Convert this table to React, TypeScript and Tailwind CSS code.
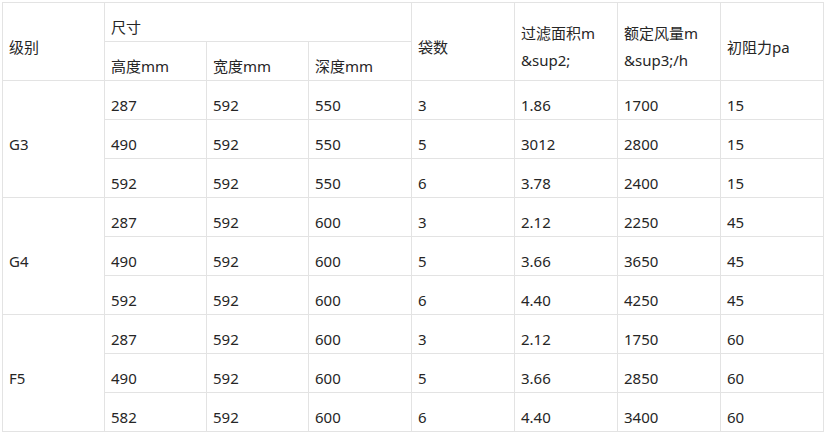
const groups = [
  {
    grade: "G3",
    rows: [
      ["287", "592", "550", "3", "1.86", "1700", "15"],
      ["490", "592", "550", "5", "3012", "2800", "15"],
      ["592", "592", "550", "6", "3.78", "2400", "15"],
    ],
  },
  {
    grade: "G4",
    rows: [
      ["287", "592", "600", "3", "2.12", "2250", "45"],
      ["490", "592", "600", "5", "3.66", "3650", "45"],
      ["592", "592", "600", "6", "4.40", "4250", "45"],
    ],
  },
  {
    grade: "F5",
    rows: [
      ["287", "592", "600", "3", "2.12", "1750", "60"],
      ["490", "592", "600", "5", "3.66", "2850", "60"],
      ["582", "592", "600", "6", "4.40", "3400", "60"],
    ],
  },
];

const widths = [102, 102, 102, 103, 103, 103, 103, 103];

const cell =
  "border border-[#e3e3e3] pl-[6px] pr-[4px] pt-[11px] pb-0 align-middle text-left font-normal leading-[27px]";

export default function App() {
  return (
    <div className="bg-white p-[2px]">
      <table
        className="w-[821px] table-fixed border-collapse text-[15px] text-[#262626]"
        style={{ fontFamily: '"Noto Sans", "Noto Sans CJK SC", sans-serif' }}
      >
        <colgroup>
          {widths.map((w, i) => (
            <col key={i} style={{ width: w }} />
          ))}
        </colgroup>
        <thead>
          <tr>
            <th rowSpan={2} className={cell}>级别</th>
            <th colSpan={3} className={cell}>尺寸</th>
            <th rowSpan={2} className={cell}>袋数</th>
            <th rowSpan={2} className={cell}>
              过滤面积m
              <br />
              &amp;sup2;
            </th>
            <th rowSpan={2} className={cell}>
              额定风量m
              <br />
              &amp;sup3;/h
            </th>
            <th rowSpan={2} className={cell}>初阻力pa</th>
          </tr>
          <tr>
            <th className={cell}>高度mm</th>
            <th className={cell}>宽度mm</th>
            <th className={cell}>深度mm</th>
          </tr>
        </thead>
        <tbody>
          {groups.map((g) =>
            g.rows.map((r, i) => (
              <tr key={g.grade + i}>
                {i === 0 && (
                  <td rowSpan={3} className={cell}>
                    {g.grade}
                  </td>
                )}
                {r.map((v, j) => (
                  <td key={j} className={cell}>
                    {v}
                  </td>
                ))}
              </tr>
            ))
          )}
        </tbody>
      </table>
    </div>
  );
}
